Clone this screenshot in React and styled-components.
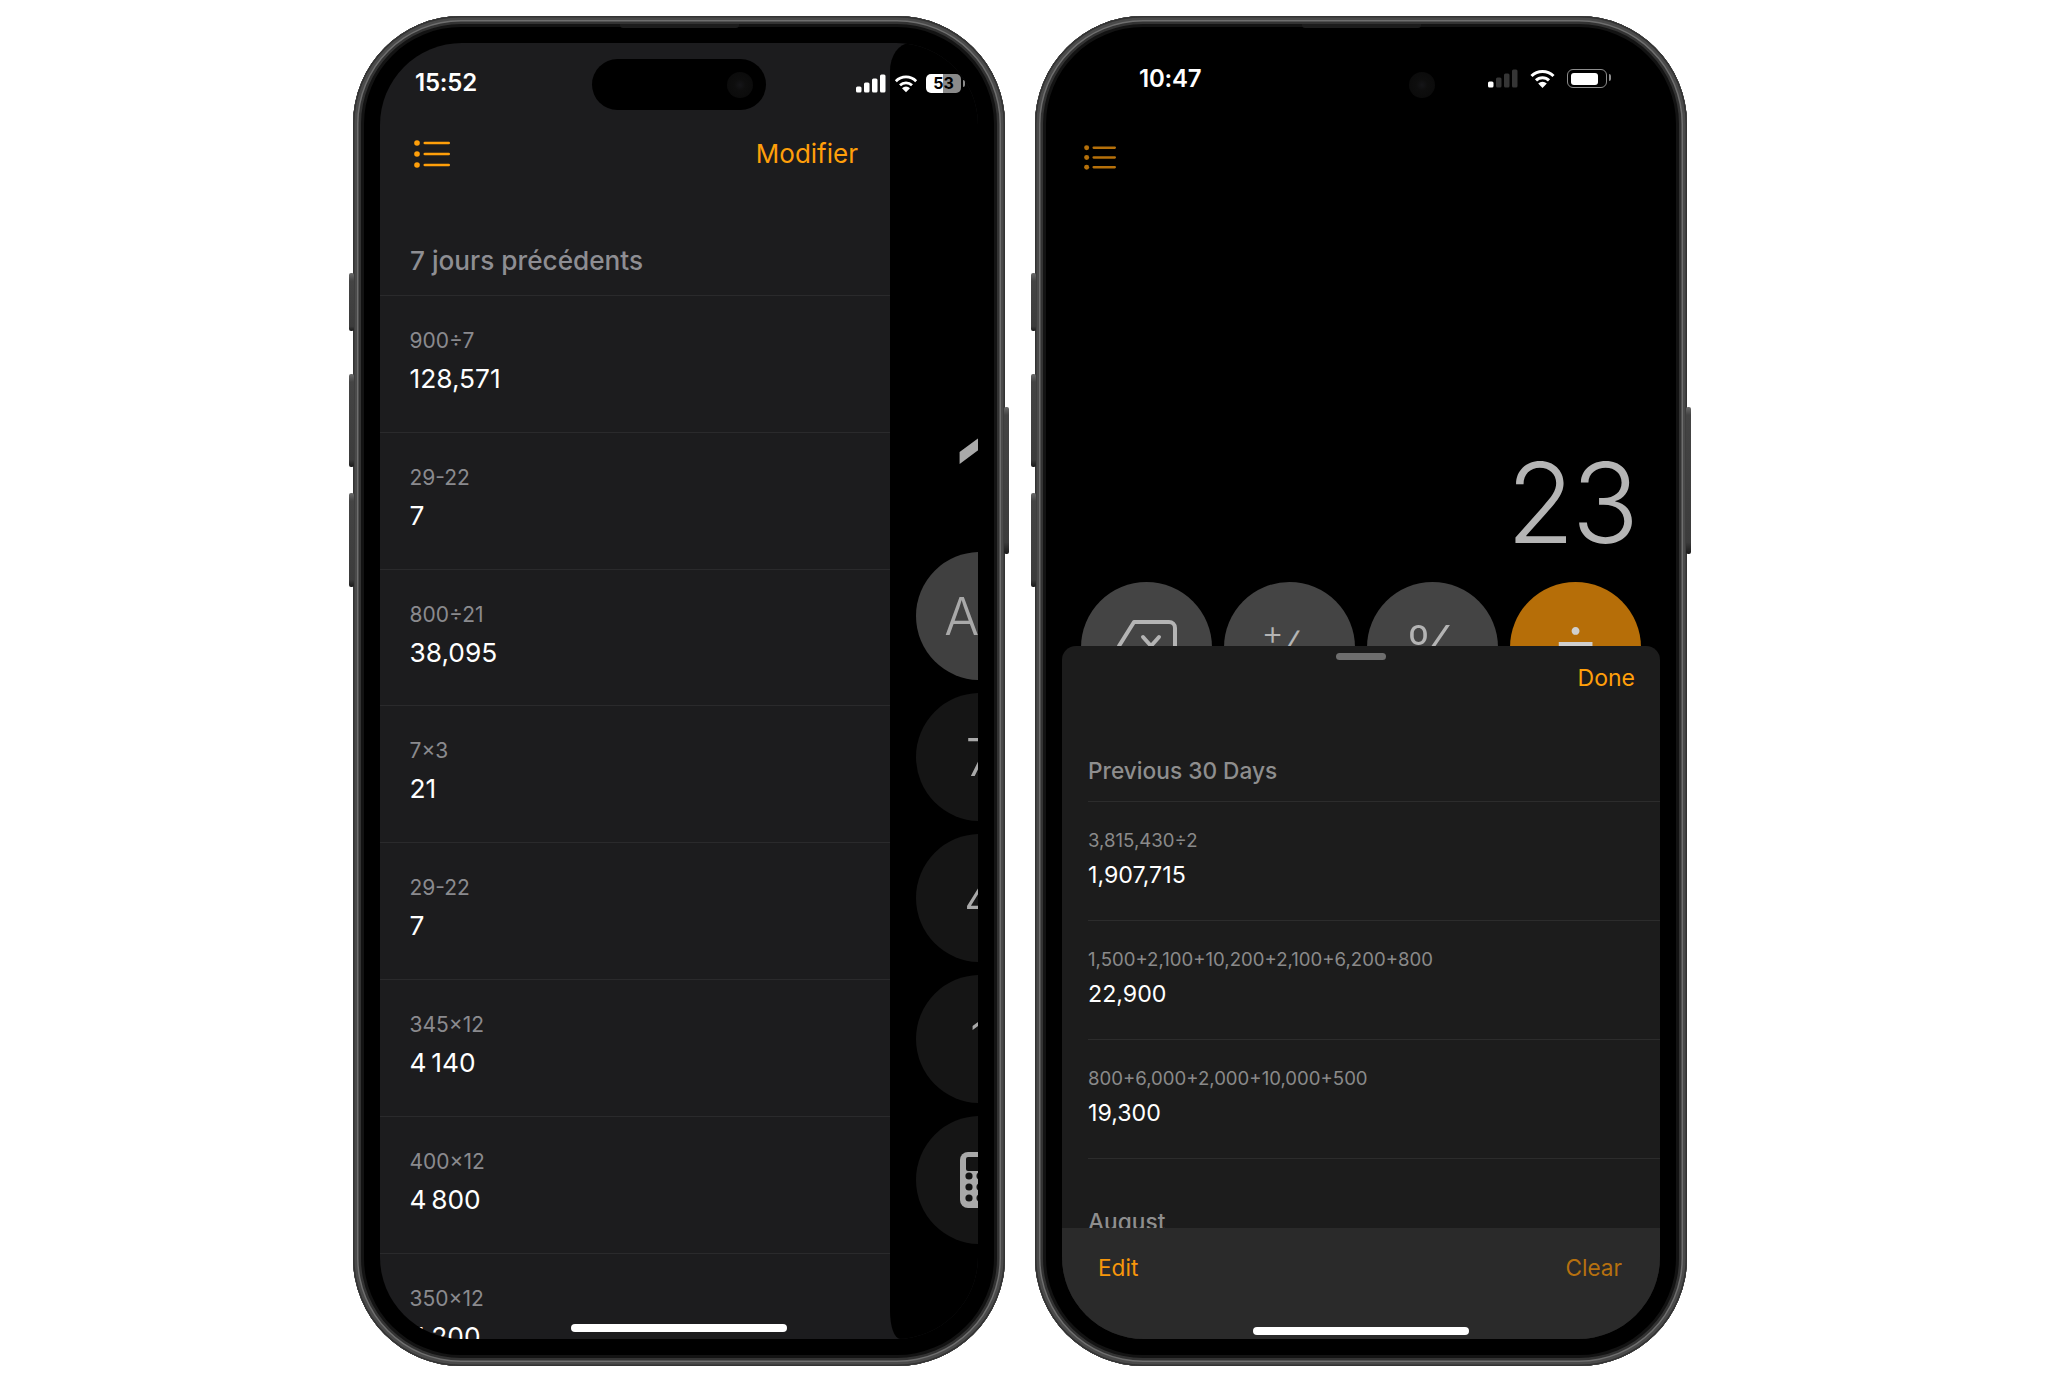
import React from "react";
import styled, { createGlobalStyle } from "styled-components";

const orange = "#ff9f0a";
const font = `Inter, "Liberation Sans", sans-serif`;

const GlobalStyle = createGlobalStyle`
  html, body {
    margin: 0;
    background: #fff;
    font-family: ${font};
  }
`;

const Page = styled.div`
  width: 2048px;
  height: 1382px;
  box-sizing: border-box;
  padding: 16px 0 0 353px;
  display: flex;
  gap: 30px;
  align-items: flex-start;
  overflow: hidden;
`;

const Phone = styled.div`
  position: relative;
  width: 652px;
  height: 1350px;
  box-sizing: border-box;
  padding: 27px;
  border-radius: 108px;
  background: #000;
  box-shadow: inset 0 0 0 1.5px #333, inset 0 0 0 4px #4a4a4a,
    inset 0 0 0 5.5px #6e6e6e, inset 0 0 0 8px #333, inset 0 0 0 11px #131313;
`;

const Earpiece = styled.div`
  position: absolute;
  top: 8px;
  left: 267px;
  width: 119px;
  height: 4px;
  border-radius: 0 0 3px 3px;
  background: #1c1c1c;
`;

const SideButton = styled.div`
  position: absolute;
  top: ${(p) => p.$top}px;
  height: ${(p) => p.$height}px;
  width: 5px;
  ${(p) => (p.$right ? "right: -4px;" : "left: -4px;")}
  border-radius: 2px;
  background: linear-gradient(180deg, #6a6a6a 0, #444 8px, #3c3c3c 92%, #1a1a1a 100%);
`;

const Screen = styled.div`
  position: relative;
  width: 598px;
  height: 1296px;
  border-radius: 82px;
  overflow: hidden;
  background: ${(p) => p.$bg};
`;

const StatusBar = styled.div`
  position: relative;
  z-index: 2;
  height: ${(p) => p.$height}px;
  box-sizing: border-box;
  padding: 0 ${(p) => p.$right}px 0 ${(p) => p.$left}px;
  display: flex;
  align-items: center;
  justify-content: space-between;
`;

const Time = styled.span`
  color: #fff;
  font-size: 24px;
  font-weight: 600;
  line-height: 28px;
  letter-spacing: -0.2px;
`;

const StatusIcons = styled.div`
  display: flex;
  align-items: center;
  gap: ${(p) => p.$gap}px;
`;

const Island = styled.div`
  position: absolute;
  top: 16px;
  left: 212px;
  width: 174px;
  height: 51px;
  border-radius: 26px;
  background: #000;
`;

const Camera = styled.div`
  position: absolute;
  top: ${(p) => p.$top}px;
  left: ${(p) => p.$left}px;
  width: 26px;
  height: 26px;
  border-radius: 50%;
  background: radial-gradient(circle, #151518 0, #0e0e0e 30%, #090909 100%);
`;

const BatteryFull = styled.div`
  position: relative;
  width: 35px;
  height: 19px;
  border-radius: 5px;
  background: linear-gradient(90deg, #fff ${(p) => p.$level}%, #8a8a8a ${(p) => p.$level}%);
  color: #000;
  font-size: 16px;
  font-weight: 700;
  line-height: 19px;
  text-align: center;
  &::after {
    content: "";
    position: absolute;
    right: -4px;
    top: 6px;
    width: 2px;
    height: 7px;
    border-radius: 0 2px 2px 0;
    background: #8a8a8a;
  }
`;

const BatteryOutline = styled.div`
  position: relative;
  width: 40px;
  height: 19px;
  box-sizing: border-box;
  padding: 2.5px;
  border: 1.5px solid #8c8c8c;
  border-radius: 6px;
  &::before {
    content: "";
    display: block;
    width: 27px;
    height: 100%;
    border-radius: 3px;
    background: #fff;
  }
  &::after {
    content: "";
    position: absolute;
    right: -5px;
    top: 4px;
    width: 2.5px;
    height: 7px;
    border-radius: 0 2px 2px 0;
    background: #8c8c8c;
  }
`;

const HomeBar = styled.div`
  position: absolute;
  z-index: 3;
  left: 191px;
  bottom: ${(p) => p.$bottom}px;
  width: 216px;
  height: 8px;
  border-radius: 4px;
  background: #fff;
`;

/* left phone: history list over the calculator */

const Panel = styled.div`
  width: 510px;
`;

const NavBar = styled.div`
  height: ${(p) => p.$height}px;
  box-sizing: border-box;
  padding: 0 32px 0 ${(p) => p.$left}px;
  display: flex;
  align-items: center;
  justify-content: space-between;
`;

const NavLink = styled.span`
  color: ${orange};
  font-size: 26px;
  line-height: 32px;
`;

const SectionTitle = styled.div`
  height: 111px;
  box-sizing: border-box;
  padding: 0 0 18px 30px;
  display: flex;
  align-items: flex-end;
  border-bottom: 1px solid #2a2a2c;
  color: #8e8e93;
  font-size: 26.2px;
  font-weight: 500;
  line-height: 32px;
`;

const Row = styled.div`
  height: 136.8px;
  box-sizing: border-box;
  padding: 32px 0 0 29.5px;
  border-bottom: 1px solid #2a2a2c;
`;

const Expr = styled.div`
  color: #8a8a8e;
  font-size: 21px;
  line-height: 26px;
`;

const Value = styled.div`
  margin-top: 9px;
  color: #fff;
  font-size: 26.3px;
  line-height: 32px;
`;

const Peek = styled.div`
  position: absolute;
  top: 0;
  bottom: 0;
  right: 0;
  width: 88px;
  z-index: 1;
  overflow: hidden;
  background: #000;
  border-top-left-radius: 20px 28px;
  border-bottom-left-radius: 10px 28px;
  display: flex;
  flex-direction: column;
  gap: 13px;
  padding: 379px 0 0 26px;
  box-sizing: border-box;
`;

const PeekDigit = styled.div`
  height: 117px;
  margin-left: 38px;
  color: #a9a9a9;
  font-size: 120px;
  font-weight: 400;
  line-height: 120px;
`;

const Key = styled.div`
  flex: none;
  width: ${(p) => p.$size}px;
  height: ${(p) => p.$size}px;
  border-radius: 50%;
  background: ${(p) => p.$bg};
  color: ${(p) => p.$color || "#a9a9a9"};
  font-size: ${(p) => p.$font || 52}px;
  font-weight: 300;
  display: flex;
  align-items: center;
  justify-content: center;
  white-space: nowrap;
`;

/* right phone: calculator with history sheet */

const Display = styled.div`
  margin-top: 248px;
  padding-right: 24px;
  text-align: right;
  color: #b5b5b5;
  font-size: 111px;
  font-weight: 350;
  line-height: 110px;
  letter-spacing: -3px;
`;

const KeyRow = styled.div`
  margin-top: 24px;
  padding-left: 19px;
  display: flex;
  gap: 12px;
`;

const Sign = styled.span`
  display: inline-block;
  font-size: ${(p) => (p.$size ? `${p.$size}px` : "inherit")};
  margin-right: ${(p) => p.$gap || 0}px;
  transform: translateY(${(p) => p.$shift || 0}px) skewX(${(p) => p.$skew || 0}deg);
`;

const Sheet = styled.div`
  position: absolute;
  z-index: 1;
  top: 603px;
  left: 0;
  right: 0;
  bottom: 0;
  display: flex;
  flex-direction: column;
  background: #1c1c1c;
  border-radius: 14px 14px 0 0;
  overflow: hidden;
`;

const SheetScroll = styled.div`
  flex: 1;
  min-height: 0;
  overflow: hidden;
`;

const Grabber = styled.div`
  width: 50px;
  height: 7px;
  margin: 7px auto 0;
  border-radius: 4px;
  background: #6e6e6e;
`;

const Done = styled.div`
  margin-top: 4px;
  padding-right: 25px;
  text-align: right;
  color: ${orange};
  font-size: 23px;
  line-height: 28px;
`;

const SheetTitle = styled.div`
  margin: 65px 0 0 26px;
  padding-bottom: 16px;
  border-bottom: 1px solid #2c2c2c;
  color: #8e8e8e;
  font-size: 22.7px;
  font-weight: 500;
  line-height: 28px;
`;

const SheetRow = styled.div`
  height: 119px;
  box-sizing: border-box;
  margin-left: 26px;
  padding-top: 26px;
  border-bottom: 1px solid #2c2c2c;
`;

const SheetExpr = styled.div`
  color: #8a8a8a;
  font-size: 18.6px;
  line-height: 24px;
`;

const SheetValue = styled.div`
  margin-top: 8px;
  color: #fff;
  font-size: 23.2px;
  line-height: 30px;
`;

const SheetMonth = styled.div`
  margin: 49px 0 0 26px;
  color: #8e8e8e;
  font-size: 22.7px;
  font-weight: 500;
  line-height: 28px;
`;

const Toolbar = styled.div`
  flex: none;
  height: 111px;
  box-sizing: border-box;
  padding: 26px 38px 0 36px;
  display: flex;
  justify-content: space-between;
  background: #2a2a2a;
  font-size: 22.6px;
  line-height: 28px;
`;

const ToolLink = styled.span`
  color: ${(p) => p.$color};
`;

const BackspaceSvg = styled.svg`
  margin-bottom: 4px;
`;

const SignalBars = ({ active }) => {
  const bars = [
    { x: 0, y: 12, h: 6 },
    { x: 8, y: 8, h: 10 },
    { x: 16, y: 4, h: 14 },
    { x: 24, y: 0, h: 18 },
  ];
  return (
    <svg width="30" height="19" viewBox="0 0 30 18">
      {bars.map((b, i) => (
        <rect key={b.x} x={b.x} y={b.y} width="5.5" height={b.h} rx="1.5" fill={i < active ? "#fff" : "#353535"} />
      ))}
    </svg>
  );
};

const WifiIcon = ({ width }) => (
  <svg width={width} height="19" viewBox="0 0 26 19">
    <g fill="none" stroke="#fff" strokeWidth="3">
      <path d="M2 7a15.5 15.5 0 0 1 22 0" />
      <path d="M6.5 11.4a9.2 9.2 0 0 1 13 0" />
    </g>
    <path d="M13 19l-4.3-4.4a6 6 0 0 1 8.6 0z" fill="#fff" />
  </svg>
);

const MenuIcon = ({ width, height, color }) => (
  <svg width={width} height={height} viewBox="0 0 36 28">
    {[3, 14, 25].map((y) => (
      <g key={y}>
        <circle cx="3" cy={y} r="2.8" fill={color} />
        <rect x="9.5" y={y - 1.3} width="26.5" height="2.6" rx="1.3" fill={color} />
      </g>
    ))}
  </svg>
);

const BackspaceIcon = () => (
  <BackspaceSvg width="60" height="52" viewBox="0 0 60 52" fill="none" stroke="#b4b4b4" strokeWidth="4" strokeLinecap="round" strokeLinejoin="round">
    <path d="M17 2H52a6 6 0 0 1 6 6V44a6 6 0 0 1-6 6H17L2 26z" />
    <path d="M26 17l16 18M42 17L26 35" />
  </BackspaceSvg>
);

const CalcIcon = () => (
  <svg width="40" height="56" viewBox="0 0 40 56">
    <rect width="40" height="56" rx="8" fill="#a9a9a9" />
    <rect x="6" y="5" width="28" height="14" rx="2" fill="#141414" />
    {[24, 35, 46].map((y) =>
      [9, 20, 31].map((x) => <circle key={`${x}-${y}`} cx={x} cy={y} r="3.6" fill="#141414" />)
    )}
  </svg>
);

const history = [
  ["900÷7", "128,571"],
  ["29-22", "7"],
  ["800÷21", "38,095"],
  ["7×3", "21"],
  ["29-22", "7"],
  ["345×12", "4\u202f140"],
  ["400×12", "4\u202f800"],
  ["350×12", "4\u202f200"],
];

const sheetHistory = [
  ["3,815,430÷2", "1,907,715"],
  ["1,500+2,100+10,200+2,100+6,200+800", "22,900"],
  ["800+6,000+2,000+10,000+500", "19,300"],
];

const PhoneChrome = () => (
  <>
    <Earpiece />
    <SideButton $top={257} $height={58} />
    <SideButton $top={358} $height={93} />
    <SideButton $top={477} $height={94} />
    <SideButton $right $top={391} $height={147} />
  </>
);

export default function App() {
  return (
    <Page>
      <GlobalStyle />

      <Phone>
        <PhoneChrome />
        <Screen $bg="#1c1c1e">
          <Island>
            <Camera $top={13} $left={135} />
          </Island>
          <StatusBar $height={80} $left={35} $right={17}>
            <Time>15:52</Time>
            <StatusIcons $gap={8}>
              <SignalBars active={4} />
              <WifiIcon width={24} />
              <BatteryFull $level={50}>53</BatteryFull>
            </StatusIcons>
          </StatusBar>
          <Panel>
            <NavBar $height={62} $left={34}>
              <MenuIcon width={36} height={28} color={orange} />
              <NavLink>Modifier</NavLink>
            </NavBar>
            <SectionTitle>7 jours précédents</SectionTitle>
            {history.map(([expr, value], i) => (
              <Row key={i}>
                <Expr>{expr}</Expr>
                <Value>{value}</Value>
              </Row>
            ))}
          </Panel>
          <Peek>
            <PeekDigit>1</PeekDigit>
            <Key $size={128} $bg="#404040">AC</Key>
            <Key $size={128} $bg="#151515">7</Key>
            <Key $size={128} $bg="#151515">4</Key>
            <Key $size={128} $bg="#151515">1</Key>
            <Key $size={128} $bg="#151515"><CalcIcon /></Key>
          </Peek>
          <HomeBar $bottom={7} />
        </Screen>
      </Phone>

      <Phone>
        <PhoneChrome />
        <Screen $bg="#000">
          <Camera $top={29} $left={347} />
          <StatusBar $height={71} $left={77} $right={53}>
            <Time>10:47</Time>
            <StatusIcons $gap={11}>
              <SignalBars active={1} />
              <WifiIcon width={27} />
              <BatteryOutline />
            </StatusIcons>
          </StatusBar>
          <NavBar $height={86} $left={22}>
            <MenuIcon width={32} height={25} color="#b5700a" />
          </NavBar>
          <Display>23</Display>
          <KeyRow>
            <Key $size={131} $bg="#444444"><BackspaceIcon /></Key>
            <Key $size={131} $bg="#444444" $font={44} $color="#b4b4b4">
              <Sign $shift={-15} $size={34} $gap={-4}>+</Sign>
              <Sign $skew={-18}>/</Sign>
              <Sign $shift={13} $size={34}>−</Sign>
            </Key>
            <Key $size={131} $bg="#444444" $font={62} $color="#b4b4b4">%</Key>
            <Key $size={131} $bg="#b66e08" $font={76} $color="#cfcfcf">
              <Sign $shift={-10}>÷</Sign>
            </Key>
          </KeyRow>
          <Sheet>
            <SheetScroll>
              <Grabber />
              <Done>Done</Done>
              <SheetTitle>Previous 30 Days</SheetTitle>
              {sheetHistory.map(([expr, value]) => (
                <SheetRow key={expr}>
                  <SheetExpr>{expr}</SheetExpr>
                  <SheetValue>{value}</SheetValue>
                </SheetRow>
              ))}
              <SheetMonth>August</SheetMonth>
            </SheetScroll>
            <Toolbar>
              <ToolLink $color="#f7960b">Edit</ToolLink>
              <ToolLink $color="#b5700f">Clear</ToolLink>
            </Toolbar>
          </Sheet>
          <HomeBar $bottom={4} />
        </Screen>
      </Phone>
    </Page>
  );
}
